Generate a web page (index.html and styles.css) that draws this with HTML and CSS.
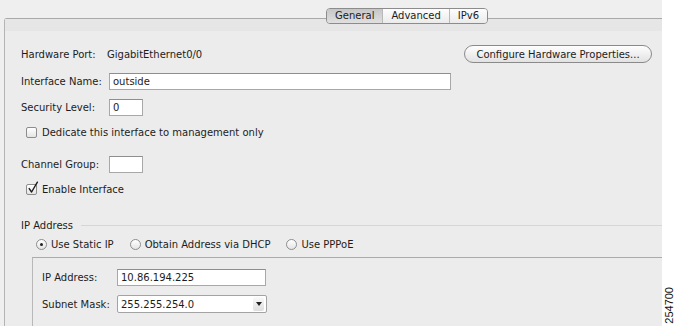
FILE: index.html
```html
<!DOCTYPE html>
<html lang="en">
<head>
    <meta charset="UTF-8">
    <meta name="viewport" content="width=device-width, initial-scale=1.0">
    <title>Edit Interface - General</title>
    <link rel="stylesheet" href="styles.css">
</head>
<body>
    <div class="screen">
        <div class="main">
            <div class="tabs">
                <div class="tab-group">
                    <span class="tab active">General</span>
                    <span class="tab">Advanced</span>
                    <span class="tab">IPv6</span>
                </div>
            </div>
            <div class="panel">
                <div class="band"></div>
                <div class="form">
                    <div class="row row-hw">
                        <span class="label label-hw">Hardware Port:</span>
                        <span class="value">GigabitEthernet0/0</span>
                        <button class="btn">Configure Hardware Properties...</button>
                    </div>
                    <div class="row row-name">
                        <span class="label">Interface Name:</span>
                        <div class="field field-name">outside</div>
                    </div>
                    <div class="row row-security">
                        <span class="label">Security Level:</span>
                        <div class="field field-short">0</div>
                    </div>
                    <div class="row row-check row-dedicate">
                        <span class="check"></span>
                        <span>Dedicate this interface to management only</span>
                    </div>
                    <div class="row row-channel">
                        <span class="label">Channel Group:</span>
                        <div class="field field-short"></div>
                    </div>
                    <div class="row row-check row-enable">
                        <span class="check checked">
                            <svg class="tick" width="12" height="13" viewBox="0 0 12 13">
                                <path d="M2.2 7.6 L4.6 11 L10.4 1.2" fill="none" stroke="#1a1a1a" stroke-width="1.4" stroke-linecap="round" stroke-linejoin="round"/>
                            </svg>
                        </span>
                        <span>Enable Interface</span>
                    </div>

                    <div class="row legend">
                        <span>IP Address</span>
                        <span class="legend-line"></span>
                    </div>
                    <div class="row radios">
                        <label class="radio-item"><span class="radio on"></span>Use Static IP</label>
                        <label class="radio-item"><span class="radio"></span>Obtain Address via DHCP</label>
                        <label class="radio-item"><span class="radio"></span>Use PPPoE</label>
                    </div>
                    <div class="inner">
                        <div class="row">
                            <span class="label label-inner">IP Address:</span>
                            <div class="field field-ip">10.86.194.225</div>
                        </div>
                        <div class="row row-subnet">
                            <span class="label label-inner">Subnet Mask:</span>
                            <div class="select">
                                <span>255.255.254.0</span>
                                <span class="select-arrow">
                                    <svg width="6" height="4" viewBox="0 0 6 4"><path d="M0 0 H6 L3 4 Z" fill="#222"/></svg>
                                </span>
                            </div>
                        </div>
                    </div>
                </div>
            </div>
        </div>
        <div class="side">
            <span class="figno">254700</span>
        </div>
    </div>
</body>
</html>
```

FILE: styles.css
```css
body {
    margin: 0;
    font-family: "DejaVu Sans", sans-serif;
    font-size: 10px;
    color: #1c1c1c;
    background: #fff;
}
.screen {
    display: flex;
    height: 326px;
    overflow: hidden;
}
.main {
    width: 662px;
    flex: none;
    background: #efefef;
    display: flex;
    flex-direction: column;
}
.side {
    flex: 1;
    display: flex;
    align-items: flex-end;
    justify-content: center;
    padding-bottom: 2px;
}
.figno {
    writing-mode: vertical-rl;
    transform: rotate(180deg);
    font-family: "Liberation Sans", Arial, sans-serif;
    font-size: 11px;
    color: #111;
}

/* tabs sit across the panel's top edge */
.tabs {
    height: 18px;
    display: flex;
    padding-left: 326px;
    position: relative;
    z-index: 1;
}
.tab-group {
    display: flex;
    margin-top: 8px;
    height: 16px;
    box-sizing: border-box;
    border: 1px solid #8c8c8c;
    border-radius: 4px;
    overflow: hidden;
}
.tab {
    padding: 0 8px;
    line-height: 14px;
    background: linear-gradient(#fdfdfd, #ebebeb);
    border-left: 1px solid #b9b9b9;
}
.tab:first-child {
    border-left: 0;
}
.tab.active {
    background: linear-gradient(#c6c6c6, #e0e0e0);
}

.panel {
    flex: 1;
    margin-left: 4px;
    border-top: 1px solid #a9a9a9;
    border-left: 1px solid #b4b4b4;
    border-top-left-radius: 3px;
    background: #ececec;
}
.band {
    height: 12px;
    background: #e6e6e6;
}
.form {
    padding-left: 16px;
}
.row {
    display: flex;
    align-items: center;
}
.label {
    width: 88px;
    flex: none;
}
.label-hw {
    width: 86px;
}
.row-hw {
    margin-top: 14px;
    height: 18px;
}
.btn {
    margin-left: auto;
    margin-right: 10px;
    width: 188px;
    height: 18px;
    padding: 0;
    border: 1px solid #8a8a8a;
    border-radius: 9px;
    background: linear-gradient(#fefefe, #e2e2e2);
    font: inherit;
    color: inherit;
}
.field {
    height: 17px;
    box-sizing: border-box;
    border: 1px solid #a8a8a8;
    border-top-color: #8e8e8e;
    background: #fff;
    padding-left: 3px;
    line-height: 15px;
}
.field-name {
    width: 342px;
}
.field-short {
    width: 34px;
}
.row-name {
    margin-top: 10px;
}
.row-security {
    margin-top: 9px;
}
.row-check {
    height: 14px;
    padding-left: 5px;
}
.row-dedicate {
    margin-top: 9px;
}
.row-channel {
    margin-top: 17px;
}
.row-enable {
    margin-top: 9px;
}
.check {
    position: relative;
    width: 11px;
    height: 11px;
    box-sizing: border-box;
    margin-right: 5px;
    border: 1px solid #8d8d8d;
    border-radius: 2px;
    background: linear-gradient(#fff, #e4e4e4);
}
.tick {
    position: absolute;
    left: 0;
    top: -4px;
}

.legend {
    margin-top: 22px;
    height: 14px;
}
.legend-line {
    flex: 1;
    margin-left: 8px;
    border-top: 1px solid #d6d6d6;
}
.radios {
    margin-top: 5px;
    height: 14px;
    padding-left: 15px;
    gap: 16px;
}
.radio-item {
    display: flex;
    align-items: center;
}
.radio {
    position: relative;
    width: 11px;
    height: 11px;
    box-sizing: border-box;
    margin-right: 4px;
    border: 1px solid #8d8d8d;
    border-radius: 50%;
    background: linear-gradient(#fff, #e4e4e4);
}
.radio.on::after {
    content: "";
    position: absolute;
    left: 3px;
    top: 3px;
    width: 3px;
    height: 3px;
    border-radius: 50%;
    background: #222;
}

.inner {
    margin-top: 6px;
    margin-left: 11px;
    padding: 11px 0 20px 9px;
    border-top: 1px solid #ababab;
    border-left: 1px solid #b8b8b8;
}
.label-inner {
    width: 75px;
}
.field-ip {
    width: 149px;
}
.row-subnet {
    margin-top: 9px;
}
.select {
    width: 150px;
    height: 18px;
    box-sizing: border-box;
    display: flex;
    align-items: center;
    justify-content: space-between;
    padding-left: 3px;
    border: 1px solid #a3a3a3;
    border-radius: 2px;
    background: #fff;
}
.select-arrow {
    width: 11px;
    height: 14px;
    margin-right: 2px;
    display: flex;
    align-items: center;
    justify-content: center;
    border-radius: 2px;
    background: linear-gradient(#fafafa, #dedede);
}
```
